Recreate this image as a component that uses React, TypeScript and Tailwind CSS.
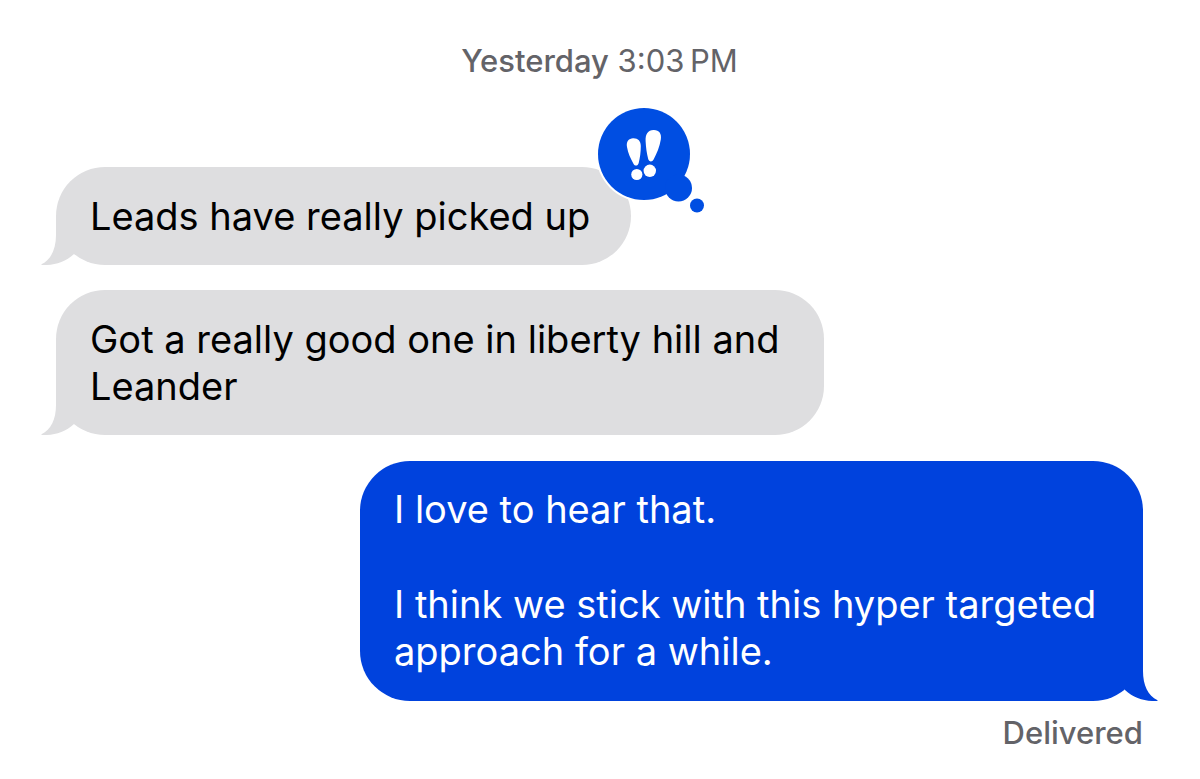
import type { ReactNode } from "react";

type Side = "received" | "sent";

function Tail({ side }: { side: Side }) {
  return (
    <svg
      aria-hidden="true"
      viewBox="0 0 36 50"
      className={
        side === "sent"
          ? "absolute -right-4 bottom-0 h-[50px] w-9 -scale-x-100 text-[#0042dd]"
          : "absolute bottom-0 -left-4 h-[50px] w-9 text-[#dedee0]"
      }
    >
      <path
        fill="currentColor"
        d="M16 0V20C16 34 11 45 1.5 49.2C1 49.5 1.3 50 2 50C14 50.500 25 47.500 34 39V0Z"
      />
    </svg>
  );
}

function Reaction() {
  return (
    <svg
      role="img"
      aria-label="Emphasized"
      viewBox="0 0 112 110"
      className="absolute -top-[62px] -right-[75px] h-[110px] w-28"
    >
      <circle cx="50" cy="49" r="48" fill="#fff" />
      <g fill="#004ee2">
        <circle cx="50" cy="49" r="46" />
        <circle cx="84.500" cy="83" r="13.500" />
        <circle cx="103" cy="100.500" r="7" />
      </g>
      <g fill="#fff">
        <path d="M33 42C32 36 35 33.500 39 33.200C44 33 46.800 36 46.800 41C46.800 47 46 53 44.700 58C44 61 41 61.500 39.600 59C36.500 53.500 34 48 33 42Z" />
        <circle cx="42.800" cy="69.500" r="5.600" />
        <path d="M51.600 36C51.300 29 54 25.200 59.500 25C65 24.800 67.800 28.500 66.800 34.500C65.700 41.500 62.800 48.500 59.600 54.500C58.200 57.200 55 57 54.200 54C52.800 48.500 51.900 42.500 51.600 36Z" />
        <circle cx="55.800" cy="65.800" r="6.200" />
      </g>
    </svg>
  );
}

function Bubble({
  side,
  children,
  reaction,
}: {
  side: Side;
  children: ReactNode;
  reaction?: ReactNode;
}) {
  return (
    <div
      className={
        side === "sent"
          ? "relative mt-px w-fit max-w-[783px] self-end rounded-[50px] bg-[#0042dd] pt-[25px] pr-[41px] pb-[26px] pl-[34px] text-white"
          : "relative w-fit max-w-[768px] self-start rounded-[49px] bg-[#dedee0] pt-[26px] pr-[41px] pb-[25px] pl-[34px] text-black"
      }
    >
      <Tail side={side} />
      <div className="relative">{children}</div>
      {reaction}
    </div>
  );
}

export default function App() {
  return (
    <main className="min-h-screen bg-white pt-10 pr-[57px] pl-14 font-['Inter','Liberation_Sans',sans-serif]">
      <p className="text-center text-[31px] leading-[42px] text-[#636368]">
        <span className="font-medium">Yesterday</span> 3:03{"\u202f"}PM
      </p>
      <section
        aria-label="Messages"
        className="mt-[85px] flex flex-col gap-[25px] text-[38px] leading-[47px]"
      >
        <Bubble side="received" reaction={<Reaction />}>
          <p>Leads have really picked up</p>
        </Bubble>
        <Bubble side="received">
          <p>Got a really good one in liberty hill and Leander</p>
        </Bubble>
        <Bubble side="sent">
          <p>I love to hear that.</p>
          <p className="mt-12">I think we stick with this hyper targeted approach for a while.</p>
        </Bubble>
      </section>
      <p className="mt-[11px] text-right text-[31px] leading-[42px] font-medium text-[#636368]">
        Delivered
      </p>
    </main>
  );
}
